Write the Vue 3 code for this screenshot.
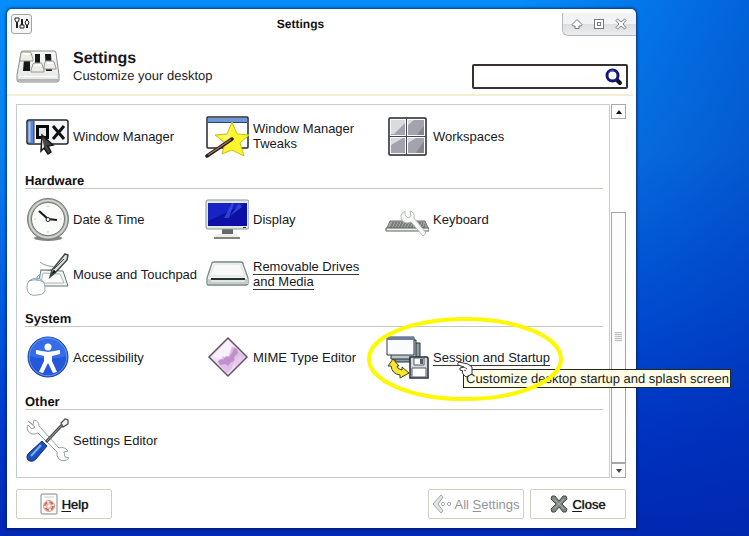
<script setup>
import { ref } from 'vue'

const query = ref('')

const groups = [
  {
    title: '',
    items: [
      { icon: 'wm', label: 'Window Manager' },
      { icon: 'tweaks', label: 'Window Manager Tweaks' },
      { icon: 'workspaces', label: 'Workspaces' },
    ],
  },
  {
    title: 'Hardware',
    items: [
      { icon: 'clock', label: 'Date & Time' },
      { icon: 'display', label: 'Display' },
      { icon: 'keyboard', label: 'Keyboard' },
      { icon: 'mouse', label: 'Mouse and Touchpad' },
      { icon: 'drive', label: 'Removable Drives and Media', underlined: true },
    ],
  },
  {
    title: 'System',
    items: [
      { icon: 'access', label: 'Accessibility' },
      { icon: 'mime', label: 'MIME Type Editor' },
      {
        icon: 'session',
        label: 'Session and Startup',
        underlined: true,
        tip: 'Customize desktop startup and splash screen',
      },
    ],
  },
  {
    title: 'Other',
    items: [{ icon: 'editor', label: 'Settings Editor' }],
  },
]
</script>

<template>
  <div class="desktop">
    <main class="window">
      <header class="titlebar">
        <button class="menu-button" type="button" aria-label="Window menu">
          <svg width="16" height="14" viewBox="0 0 16 14">
            <path d="M3 4v7M8 2v6M13 2v9" stroke="#222" stroke-width="2" />
            <path d="M1 1h4v2L4 5H2L1 3zM6 8h4v3H6zM11 5l2-2 2 2-1 3h-2z" fill="#fff" stroke="#222" />
          </svg>
        </button>
        <span class="window-title">Settings</span>
        <div class="controls">
          <button type="button" aria-label="Shade">
            <svg width="12" height="12" viewBox="0 0 12 12">
              <path d="M6 1.500 11 6.500Q11 8 9 8H8v2.500H4V8H3Q1 8 1 6.500Z" fill="#fff" stroke="#777b78" />
            </svg>
          </button>
          <button type="button" aria-label="Maximize">
            <svg width="12" height="12" viewBox="0 0 12 12">
              <rect x="1.500" y="1.500" width="9" height="9" fill="#fff" stroke="#777b78" />
              <rect x="4.500" y="4.500" width="3" height="3" fill="#fff" stroke="#777b78" />
            </svg>
          </button>
          <button type="button" aria-label="Close window">
            <svg width="12" height="12" viewBox="0 0 12 12">
              <path d="M1 2.500 2.500 1 6 4 9.500 1 11 2.500 8 6l3 3.500L9.500 11 6 8l-3.500 3L1 9.500 4 6Z" fill="#fff" stroke="#777b78" />
            </svg>
          </button>
        </div>
      </header>

      <section class="heading">
        <svg class="heading-icon" width="44" height="34" viewBox="0 0 44 34">
          <defs>
            <linearGradient id="mixer" x1="0" y1="0" x2="0" y2="1">
              <stop offset="0" stop-color="#f8f8f6" />
              <stop offset="1" stop-color="#e4e6e3" />
            </linearGradient>
          </defs>
          <path d="M7 1h31q2 0 2 2l3 22v5q0 2-2 2H3q-2 0-2-2v-5L5 3q0-2 2-2Z" fill="url(#mixer)" stroke="#8b8e8b" />
          <path d="M2 29h40v2H2z" fill="#b3b5b3" />
          <path d="M3 26.500h38" stroke="#fff" />
          <path d="M8 9h6v12H7zM19 4h5v11h-5zM29 4h6l1 17h-6z" fill="#15191b" />
          <path d="M6 2h8q1 0 1 1l2 6v2H4V9l1-6q0-1 1-1Z" fill="#eeeee6" stroke="#969a91" />
          <path d="M18 13h7q1 0 1 1l2 6v2H15v-2l2-6Z" fill="#eeeee6" stroke="#969a91" />
          <path d="M30 11h7q1 0 1 1l2 6v1H28v-2l1-5Z" fill="#eeeee6" stroke="#969a91" />
          <path d="M7 4h7M19 15h6M31 13h6" stroke="#fff" stroke-width="2" />
        </svg>
        <div class="heading-text">
          <h1>Settings</h1>
          <p>Customize your desktop</p>
        </div>
        <label class="search">
          <input v-model="query" type="text" aria-label="Search settings" />
          <svg width="18" height="18" viewBox="0 0 18 18">
            <path d="m11 11 4 4" stroke="#111421" stroke-width="4" stroke-linecap="round" />
            <circle cx="7.500" cy="7.500" r="5.500" fill="#fff" stroke="#15157c" stroke-width="3" />
            <path d="M3.500 5.500a5 5 0 0 1 5-3" fill="none" stroke="#6d70c4" />
          </svg>
        </label>
      </section>

      <section class="browser">
        <div class="panel">
          <section v-for="(group, g) in groups" :key="g" class="group">
            <h2 v-if="group.title">{{ group.title }}</h2>
            <div class="grid">
              <div v-for="item in group.items" :key="item.icon" class="cell">
                <button class="item" type="button">
                  <svg class="item-icon" width="44" height="44" viewBox="0 0 44 44">
                    <g v-if="item.icon === 'wm'">
                      <rect x="2" y="6" width="41" height="24" rx="2" fill="#f4f5f6" stroke="#20242b" stroke-width="1.500" />
                      <path d="M3 7h6v22H3z" fill="#5c86cf" />
                      <path d="M4.500 8v20" stroke="#a9c3ee" stroke-width="2" />
                      <path d="M9 7v22" stroke="#283b62" />
                      <rect x="12.500" y="12.500" width="10" height="11" fill="#e4e7eb" stroke="#080808" stroke-width="3" />
                      <path d="m28 12 11 13M39 12 28 25" stroke="#111" stroke-width="3" />
                      <path d="m17 21 11 10-5 1 3 6-3 2-4-6-3 3Z" fill="#444" stroke="#161616" stroke-width="1.500" />
                      <path d="m17.500 25 1.500 8-2 2Z" fill="#fff" />
                    </g>
                    <g v-else-if="item.icon === 'tweaks'">
                      <rect x="2" y="3" width="41" height="31" rx="1" fill="#fff" stroke="#242830" stroke-width="1.500" />
                      <path d="M3 4h39v4H3z" fill="#6e98d3" />
                      <path d="M3 8.500h39" stroke="#284672" />
                      <path d="m27 8 5 12 12 1-9 8 4 13-12-6-10 4 3-11-10-8 12-1Z" fill="#fff52a" stroke="#c3bf24" />
                      <path d="m27 11-4 10-8 1 8 6Z" fill="#fff979" />
                      <path d="M2 42 27 25" stroke="#241b1b" stroke-width="3.500" stroke-linecap="round" />
                      <path d="M3 41 26 25.500" stroke="#a97166" stroke-width="1.500" />
                    </g>
                    <g v-else-if="item.icon === 'workspaces'">
                      <rect x="4" y="4" width="37" height="37" rx="1" fill="#fafafa" stroke="#23242a" stroke-width="1.500" />
                      <path d="M6 6h14v15H6zM23 6h16v15H23zM6 24h14v15H6zM23 24h16v15H23z" fill="#a3a3ae" />
                      <path d="M6 6h14v3L9 20H6zM6 24h12L6 31zM23 24h8l-8 5zM23 6h6l-6 5z" fill="#dadbdf" />
                      <path d="M31 39h8V27zM32 21h7v-9z" fill="#85858f" />
                      <path d="M21.500 4v37M4 22.500h37" stroke="#46474f" />
                    </g>
                    <g v-else-if="item.icon === 'clock'">
                      <ellipse cx="23" cy="41" rx="14" ry="3" fill="#555" opacity=".7" />
                      <circle cx="23" cy="22" r="20.500" fill="#a3a8a2" stroke="#777c77" />
                      <circle cx="23" cy="22" r="18.500" fill="none" stroke="#d6dad4" stroke-width="1.500" />
                      <circle cx="23" cy="22" r="16.500" fill="#fcfdfb" stroke="#737973" />
                      <path d="M23 8v2M23 34v2M9 22h2M35 22h2" stroke="#c7cbc6" />
                      <path d="m14 14 9 8 9 1" fill="none" stroke="#151c1e" stroke-width="2.200" />
                      <circle cx="23" cy="22.500" r="2" fill="#fff" stroke="#151c1e" />
                    </g>
                    <g v-else-if="item.icon === 'display'">
                      <path d="M17 32h11v6H17z" fill="#666b68" />
                      <path d="m12 37-3 4h26l-3-4Z" fill="#ecefeb" />
                      <path d="M9 41h26" stroke="#59615c" stroke-width="1.500" />
                      <rect x="1" y="3" width="43" height="29" rx="2" fill="#e0e8e8" stroke="#889895" />
                      <rect x="3" y="6" width="39" height="23" fill="#0c10a5" />
                      <path d="M3 6h39L3 24z" fill="#1823c6" />
                      <path d="m27 6-8 15h5l5-15M34 7l-9 12 12-9" fill="#4356e0" opacity=".7" />
                      <path d="M38 30.500h3" stroke="#333" />
                    </g>
                    <g v-else-if="item.icon === 'keyboard'">
                      <path d="M5 24h35l4 9H1Z" fill="#a1a49f" stroke="#6d756e" />
                      <path d="M7 26h31M6 28h34M5 30h36" stroke="#555b57" stroke-dasharray="2 1" />
                      <path d="M1 31h43v3H1z" fill="#edf0ed" stroke="#59675e" />
                      <path d="M20 14q-4 2-4 5 0 6 6 7l4-1 12 14 3-3-12-15q1-6-4-7l1 5-3 2-3-3Z" fill="#f9faf8" stroke="#b5bab6" />
                    </g>
                    <g v-else-if="item.icon === 'mouse'">
                      <path d="m16 18 22 1 5 15H13Z" fill="#f4f6f3" stroke="#627673" />
                      <path d="m18 21 17 1 4 9H16Z" fill="#fafbfa" stroke="#a9b9b4" />
                      <path d="M15 10q5 5 21 5Q23 19 15 18" fill="none" stroke="#8c9c96" />
                      <path d="m40 2 3 1-1 5-12 13-5 4 2-7Z" fill="#dfe2df" stroke="#3d4744" stroke-width="1.500" />
                      <path d="m39 7-10 10M26 23l3-5 2 2Z" stroke="#3e4341" />
                      <path d="M12 26Q1 27 2 36t10 7q9 0 8-8-1-8-8-9Z" fill="#fff" stroke="#95a89f" />
                      <path d="M4 29q8-3 14 1M12 29v-4l4-4" fill="none" stroke="#769ed0" />
                    </g>
                    <g v-else-if="item.icon === 'drive'">
                      <path d="M7 11q0-1 2-1h27q2 0 2 2l5 14v5q0 2-2 2H3q-1 0-1-2v-5Z" fill="#f3f5f4" stroke="#778783" stroke-width="1.300" />
                      <path d="M10 12h25l5 12H4Z" fill="#f7f8f7" stroke="#dbe2df" />
                      <path d="M3 27h40v5H3z" fill="#c6cdca" />
                      <path d="M6 27h34" stroke="#253331" stroke-width="2" />
                      <path d="M6 29h34" stroke="#fff" />
                    </g>
                    <g v-else-if="item.icon === 'access'">
                      <circle cx="23" cy="22" r="20" fill="#2457da" stroke="#1c3f9b" />
                      <path d="M4 21a19 19 0 0 1 38 0q-18 6-38 0Z" fill="#356ce8" />
                      <circle cx="23" cy="22" r="18.800" fill="none" stroke="#6594f0" />
                      <circle cx="23" cy="12" r="3.500" fill="#fff" />
                      <path d="m11 15 12 2 12-2v4l-8 2v5l5 11-4 1-5-10-5 10-4-1 5-11v-5l-8-2Z" fill="#fff" />
                    </g>
                    <g v-else-if="item.icon === 'mime'">
                      <path d="M23 3 42 22 23 41 4 22Z" fill="#f3ddf5" stroke="#67506c" stroke-width="1.500" />
                      <path d="M23 5 39 21 28 16 20 25 7 22Z" fill="#faf0fb" />
                      <path d="m12 27 4-2 2-4 3 2 3-3 3-9 4 2 9 9-7 7-3-3-4 9-4 3Z" fill="#e0bde6" />
                      <path d="m13 26 3-2 2 1 3-4 3 1 3-4 2-5 3 1 1 4-4 4 1 4-4 1-3 4-3-2-5 1Z" fill="#b27cc0" opacity=".7" />
                      <path d="m29 25 7-5 3 3-9 9Z" fill="#e7c9ed" />
                    </g>
                    <g v-else-if="item.icon === 'session'">
                      <path d="M10 8h25v19H10z" fill="#8b9da0" stroke="#28333a" />
                      <path d="M6 5h25v19H6z" fill="#b5c9cf" stroke="#28333a" />
                      <path d="M2 2h27v18H2z" fill="#fafbfc" stroke="#343a45" />
                      <path d="M2 2h27v3H2z" fill="#6c7da1" />
                      <path d="M25 22h17l1 1v20H25z" fill="#d5d8dc" stroke="#242a37" stroke-width="1.500" />
                      <path d="M29 23h10v7H29zM27 33h14v9H27z" fill="#fff" stroke="#535966" />
                      <path d="M35 24h3v5h-3z" fill="#555d67" />
                      <path d="m8 24-5 7h3q1 8 9 9v3l9-5-7-6v3q-5-1-5-4h2Z" fill="#f7e62f" stroke="#454219" />
                    </g>
                    <g v-else>
                      <path d="m2 3 5 4 1-5q5 1 5 6l20 22q5-2 9 3l-4 1 1 5 4 1q-5 5-10 1-3-3-2-7L12 15Q5 18 2 13q-2-3 0-6l4 4 3-2Z" transform="translate(1 0)" fill="#fff" stroke="#96a09b" />
                      <path d="M21 24 37 7" stroke="#444b48" stroke-width="3" />
                      <path d="M22 23 37 7" stroke="#a2a8a5" />
                      <path d="m36 5 4-4 3 1v4l-5 3Z" fill="#eef0ed" stroke="#4b5350" stroke-width="1.300" />
                      <path d="m17 23 5 5L11 41q-4 4-8 1-3-4 2-8Z" fill="#1b51bd" stroke="#16316a" />
                      <path d="m16 27-10 11" stroke="#7fabf0" stroke-width="2" />
                    </g>
                  </svg>
                  <span class="item-label"><span :class="{ underlined: item.underlined }">{{ item.label }}</span></span>
                </button>
                <template v-if="item.tip">
                  <div class="tooltip" role="tooltip">{{ item.tip }}</div>
                  <svg class="pointer" width="16" height="18" viewBox="0 0 16 18">
                    <path d="M2 1Q0 2 1 4l6 2-4 1v2l3 1-1 1 1 2 3 3 6-3V6l-4-3Z" fill="#fff" stroke="#333" />
                    <path d="m7 6 3 2M7 9l2 1" stroke="#555" />
                  </svg>
                  <svg class="ring" width="198" height="88" viewBox="0 0 198 88">
                    <ellipse cx="99" cy="44" rx="96" ry="40" fill="none" stroke="#fff800" stroke-width="4" />
                  </svg>
                </template>
              </div>
            </div>
          </section>
        </div>

        <div class="scrollbar">
          <button type="button" aria-label="Scroll up">
            <svg width="8" height="6" viewBox="0 0 8 6"><path d="m4 1 3 4H1Z" fill="#111" /></svg>
          </button>
          <div class="track">
            <div class="thumb"><span class="grip"></span></div>
          </div>
          <button type="button" aria-label="Scroll down">
            <svg width="8" height="6" viewBox="0 0 8 6"><path d="m4 5 3-4H1Z" fill="#444" /></svg>
          </button>
        </div>
      </section>

      <footer class="actions">
        <button class="action" type="button">
          <svg width="18" height="22" viewBox="0 0 18 22">
            <rect x="1" y="1" width="16" height="20" rx="1" fill="#fbfbf8" stroke="#7b8b8a" />
            <path d="M4 4h10" stroke="#cfcfcb" />
            <circle cx="9" cy="13" r="4" fill="none" stroke="#f4e8e3" stroke-width="3" />
            <circle cx="9" cy="13" r="4" fill="none" stroke="#cf6a55" stroke-width="2" stroke-dasharray="4 2.283" />
            <circle cx="9" cy="13" r="5.500" fill="none" stroke="#c77664" stroke-width=".7" />
            <circle cx="9" cy="13" r="2.200" fill="#fff" stroke="#c77664" stroke-width=".7" />
          </svg>
          <span><u>H</u>elp</span>
        </button>
        <span class="spacer"></span>
        <button class="action" type="button" disabled>
          <svg width="20" height="20" viewBox="0 0 20 20">
            <path d="M9 1 1 10l8 9 2-2-5-7 5-7Z" fill="#e6e6e6" stroke="#a1a5a5" />
            <circle cx="11" cy="10" r="1.700" fill="#fff" stroke="#a1a5a5" />
            <circle cx="17" cy="10" r="1.700" fill="#fff" stroke="#a1a5a5" />
          </svg>
          <span>All <u>S</u>ettings</span>
        </button>
        <button class="action" type="button">
          <svg width="18" height="18" viewBox="0 0 18 18">
            <path d="m2 1 3 0 4 5 4-5h3l1 3-5 5 5 5-1 3h-3l-4-5-4 5H2l-1-3 5-5-5-5Z" fill="#7f8580" stroke="#454a47" stroke-linejoin="round" />
            <path d="m4 4 10 10M14 4 4 14" stroke="#a5aaa6" />
          </svg>
          <span><u>C</u>lose</span>
        </button>
      </footer>
    </main>
  </div>
</template>

<style>
body {
  margin: 0;
}
</style>

<style scoped>
.desktop {
  box-sizing: border-box;
  display: flex;
  min-height: 100vh;
  padding: 9px 113px 8px 7px;
  background:
    linear-gradient(95deg, transparent 65%, rgba(0, 40, 170, 0.5) 100%),
    linear-gradient(180deg, #048dfb 0%, #0880ee 28%, #0059de 58%, #0038ca 80%, #0028b4 100%);
  color: #17191c;
  font: 13px/15px "Liberation Sans", Arial, sans-serif;
  text-rendering: geometricPrecision;
}

h1,
h2,
p {
  margin: 0;
}

button {
  padding: 0;
  border: 0;
  background: none;
  color: inherit;
  font: inherit;
}

svg {
  display: block;
  flex: none;
}

.window {
  flex: 1;
  display: flex;
  flex-direction: column;
  min-width: 0;
  border-radius: 5px 5px 0 0;
  background: #fff;
  box-shadow: 0 0 3px 1px rgba(0, 20, 70, 0.7);
}

.titlebar {
  display: grid;
  grid-template-columns: 1fr auto 1fr;
  align-items: center;
  height: 30px;
  padding-left: 4px;
}

.menu-button {
  display: flex;
  align-items: center;
  justify-content: center;
  width: 21px;
  height: 20px;
  border: 1px solid #a0a3a6;
  border-radius: 3px;
  background: #f6f6f7;
}

.window-title {
  padding-right: 46px;
  color: #111;
  font-size: 12px;
  font-weight: bold;
}

.controls {
  display: flex;
  justify-self: end;
  gap: 10px;
  padding: 5px 9px 5px 8px;
  border-left: 1px solid #b5b9bc;
  border-bottom: 1px solid #b5b9bc;
  border-radius: 0 0 0 6px;
  background: linear-gradient(#f3f3f6 0 50%, #dcdee0 50%, #ececee);
}

.heading {
  display: flex;
  gap: 13px;
  margin-right: 3px;
  padding: 11px 5px 5px 9px;
  border-bottom: 2px solid #f4edcf;
}

.heading-text {
  flex: 1;
  padding-bottom: 6px;
}

h1 {
  font-size: 16px;
  line-height: 18px;
}

.search {
  box-sizing: border-box;
  display: flex;
  align-items: center;
  align-self: flex-end;
  width: 156px;
  height: 25px;
  padding-right: 3px;
  border: 2px solid #37302f;
  border-radius: 2px;
}

.search input {
  flex: 1;
  min-width: 0;
  border: 0;
  outline: 0;
  background: none;
  font: inherit;
}

.browser {
  flex: 1;
  display: flex;
  gap: 1px;
  padding: 8px 10px 11px 9px;
}

.panel {
  box-sizing: border-box;
  flex: 1;
  padding: 9px 6px 13px 8px;
  border: 1px solid #c4cdd0;
}

.group + .group {
  margin-top: 15px;
}

h2 {
  margin-bottom: 8px;
  border-bottom: 1px solid #c9c6c0;
  color: #111;
  font-size: 13px;
  line-height: 15px;
}

.grid {
  display: grid;
  grid-template-columns: repeat(auto-fill, 180px);
  row-gap: 11px;
}

.cell {
  position: relative;
}

.item {
  display: flex;
  align-items: center;
  gap: 4px;
  height: 44px;
  text-align: left;
}

.item-label {
  max-width: 128px;
}

.underlined {
  border-bottom: 1px solid #403830;
}

.tooltip {
  position: absolute;
  top: 34px;
  left: 78px;
  z-index: 1;
  padding: 1px 1px 1px 2px;
  border: 1px solid #22281c;
  background: #fdfde6;
  white-space: nowrap;
}

.pointer {
  position: absolute;
  top: 26px;
  left: 72px;
  z-index: 2;
}

.ring {
  position: absolute;
  top: -20px;
  left: -19px;
  z-index: 3;
  pointer-events: none;
}

.scrollbar {
  display: flex;
  flex-direction: column;
  width: 15px;
}

.scrollbar button {
  display: flex;
  align-items: center;
  justify-content: center;
  height: 15px;
  border: 1px solid #a9aaa8;
}

.track {
  flex: 1;
  display: flex;
  flex-direction: column;
  justify-content: flex-end;
}

.thumb {
  display: flex;
  align-items: center;
  justify-content: center;
  box-sizing: border-box;
  height: 73%;
  border: 1px solid #a2a5a9;
  background: #fdfdfd;
}

.grip {
  width: 7px;
  height: 10px;
  background: repeating-linear-gradient(#c9bfcb 0 1px, #f0eaf1 1px 2px);
}

.actions {
  display: flex;
  gap: 6px;
  padding: 0 10px 9px 9px;
}

.spacer {
  flex: 1;
}

.action {
  box-sizing: border-box;
  display: flex;
  align-items: center;
  justify-content: center;
  gap: 4px;
  width: 96px;
  height: 30px;
  border: 1px solid #d0cfc0;
  border-radius: 2px;
  background: #fff;
  text-shadow: 0 0 1px currentColor;
}

.action:disabled {
  gap: 2px;
  color: #92969a;
  text-shadow: none;
}

.action u {
  text-underline-offset: 2px;
}
</style>
